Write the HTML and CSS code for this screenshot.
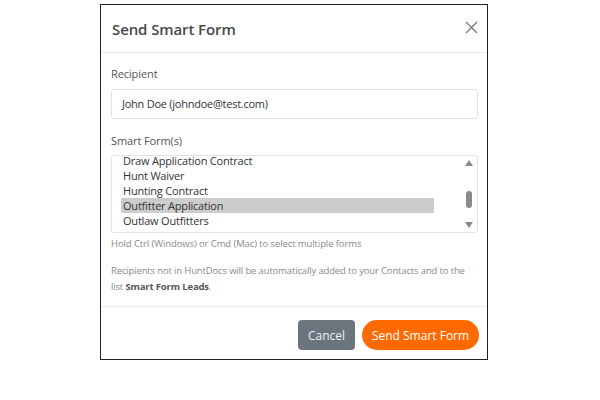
FILE: index.html
```html
<!DOCTYPE html>
<html>
<head>
<meta charset="utf-8">
<link rel="stylesheet" href="styles.css">
</head>
<body>
<div class="dialog">
  <div class="header">
    <h1 class="title">Send Smart Form</h1>
    <span class="close">
      <svg width="13" height="13" viewBox="0 0 13 13"><path d="M1 1L12 12M12 1L1 12" stroke="#777" stroke-width="1.3" fill="none"/></svg>
    </span>
  </div>
  <div class="body">
    <div class="label">Recipient</div>
    <div class="input">John Doe (johndoe@test.com)</div>
    <div class="label label-forms">Smart Form(s)</div>
    <div class="listbox">
      <div class="list">
        <div class="item">Draw Application Contract</div>
        <div class="item">Hunt Waiver</div>
        <div class="item">Hunting Contract</div>
        <div class="item selected">Outfitter Application</div>
        <div class="item">Outlaw Outfitters</div>
        <div class="item">Sample Contract</div>
      </div>
      <div class="scrollbar">
        <span class="arrow up"></span>
        <span class="thumb"></span>
        <span class="arrow down"></span>
      </div>
    </div>
    <p class="hint">Hold Ctrl (Windows) or Cmd (Mac) to select multiple forms</p>
    <p class="note">Recipients not in HuntDocs will be automatically added to your Contacts and to the list <b>Smart Form Leads</b>.</p>
  </div>
  <div class="footer">
    <button class="btn cancel">Cancel</button>
    <button class="btn send">Send Smart Form</button>
  </div>
</div>
</body>
</html>
```
FILE: styles.css
```css
html, body {
  margin: 0;
  padding: 0;
  background: #fff;
  font-family: "Open Sans", "Noto Sans", sans-serif;
}
.dialog {
  margin: 4px 0 0 100px;
  width: 386px;
  border: 1px solid #222;
  background: #fff;
}
.header {
  height: 47px;
  display: flex;
  align-items: center;
  justify-content: space-between;
  padding: 0 9px 0 11px;
  border-bottom: 1px solid #ececec;
}
.title {
  margin: 0;
  font-size: 15px;
  font-weight: 600;
  letter-spacing: -0.1px;
  color: #484848;
}
.close {
  display: flex;
  width: 13px;
  height: 13px;
  margin-top: -2px;
}
.body {
  padding: 14px 9px 11px 10px;
}
.label {
  font-size: 11px;
  line-height: 14px;
  letter-spacing: -0.1px;
  color: #555;
  margin-bottom: 8px;
}
.label-forms {
  margin-top: 15px;
  margin-bottom: 7px;
}
.input {
  height: 28px;
  border: 1px solid #e2e2e2;
  border-radius: 3px;
  padding-left: 10px;
  font-size: 11px;
  letter-spacing: -0.25px;
  line-height: 28px;
  color: #333;
}
.listbox {
  height: 76px;
  border: 1px solid #e2e2e2;
  border-radius: 3px;
  display: flex;
  overflow: hidden;
}
.list {
  flex: 1;
  padding: 0 27px 0 9px;
  margin-top: -3px;
}
.item {
  font-size: 11px;
  letter-spacing: -0.2px;
  line-height: 15px;
  color: #333;
  padding-left: 2px;
}
.item.selected {
  background: #cdcdcd;
}
.scrollbar {
  width: 16px;
  display: flex;
  flex-direction: column;
  align-items: center;
  justify-content: space-between;
  padding: 4px 0;
  position: relative;
}
.arrow {
  width: 0;
  height: 0;
  border-left: 4px solid transparent;
  border-right: 4px solid transparent;
}
.arrow.up {
  border-bottom: 6px solid #888;
}
.arrow.down {
  border-top: 6px solid #888;
}
.thumb {
  position: absolute;
  top: 35px;
  left: 5px;
  width: 6px;
  height: 17px;
  border-radius: 3px;
  background: #8a8a8a;
}
.hint {
  margin: 4px 0 0;
  font-size: 9.5px;
  letter-spacing: -0.1px;
  line-height: 14px;
  color: #8a8a8a;
}
.note {
  margin: 12px 0 0;
  font-size: 9.5px;
  letter-spacing: -0.15px;
  line-height: 16px;
  color: #8a8a8a;
}
.note b {
  color: #555;
  font-weight: 700;
}
.footer {
  border-top: 1px solid #ececec;
  display: flex;
  justify-content: flex-end;
  gap: 7px;
  padding: 13px 8px 9px 0;
}
.btn {
  height: 30px;
  border: none;
  font-family: "Open Sans", "Noto Sans", sans-serif;
  font-size: 12px;
  color: #fff;
  padding: 0;
}
.cancel {
  width: 57px;
  background: #6c757d;
  border-radius: 4px;
  color: #eef0f2;
}
.send {
  width: 117px;
  background: #ff6a00;
  border-radius: 15px;
}
```
